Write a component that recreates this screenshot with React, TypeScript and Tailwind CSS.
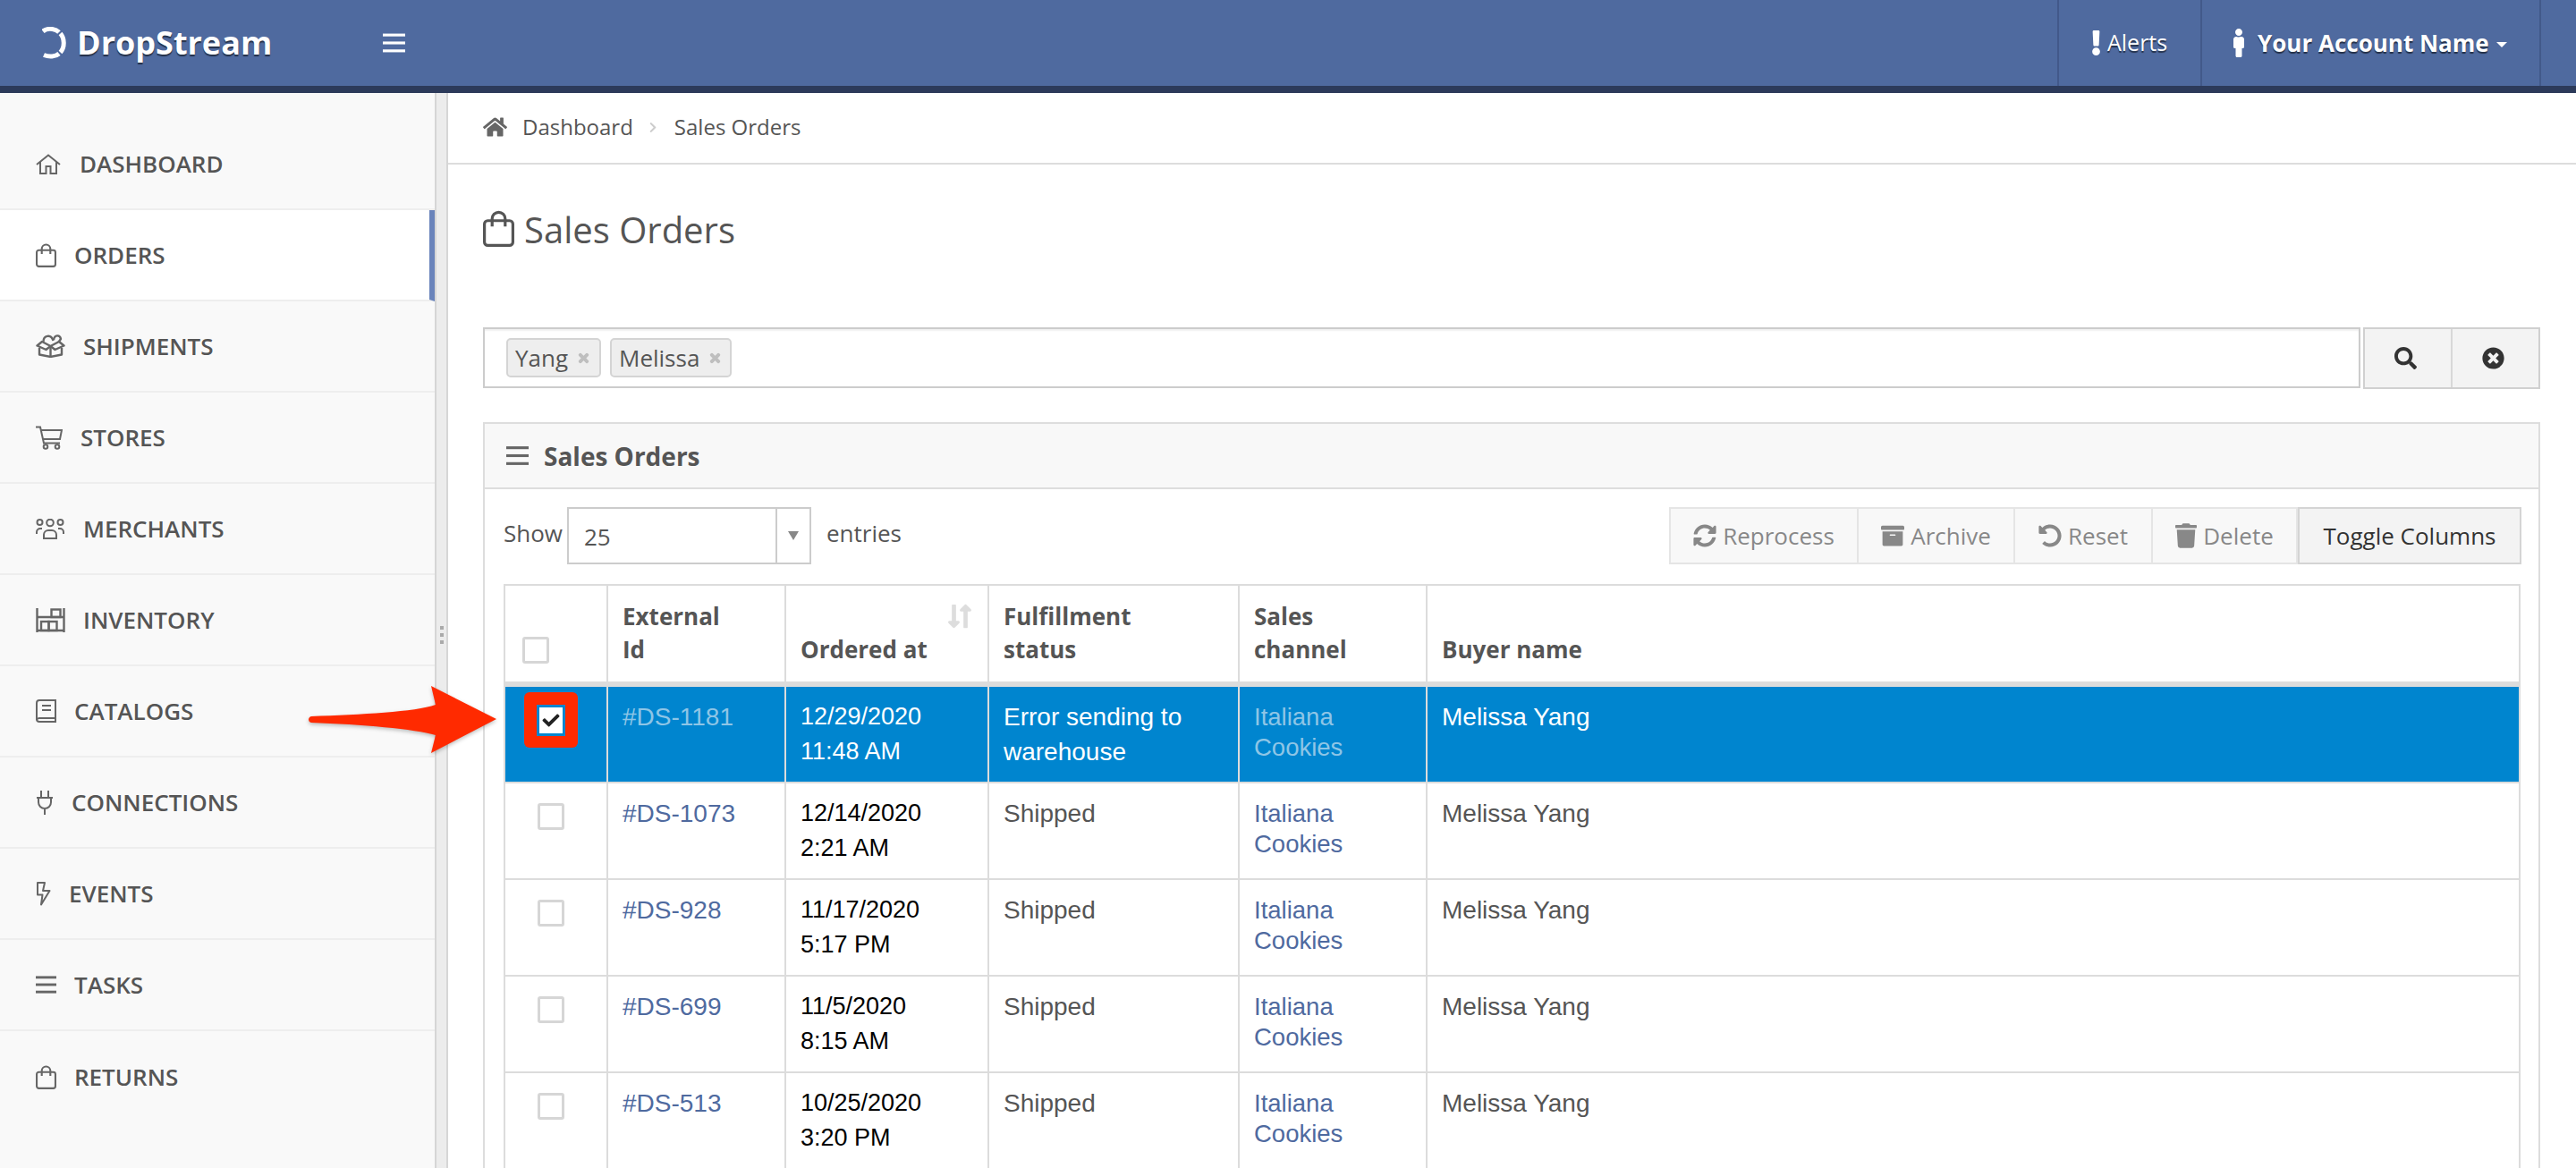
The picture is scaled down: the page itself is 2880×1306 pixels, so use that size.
import React from "react";
import { FaHome, FaSearch, FaTimesCircle, FaExclamation, FaMale, FaSyncAlt, FaArchive, FaUndoAlt, FaTrash, FaCheck, FaTimes, FaChevronRight, FaLongArrowAltDown, FaLongArrowAltUp } from "react-icons/fa";

type P = { className?: string };
const Bag = ({ className }: P) => (
  <svg viewBox="0 0 24 28" fill="none" stroke="currentColor" strokeWidth="2.200" className={className}>
    <rect x="1.100" y="8" width="21.800" height="18.900" rx="2.500" />
    <path d="M7 12.500V6.500a5 5 0 0 1 10 0v6" />
  </svg>
);
const Box = ({ className }: P) => (
  <svg viewBox="0 0 33 26" fill="none" stroke="currentColor" strokeWidth="2.400" strokeLinejoin="round" className={className}>
    <path d="M4 15v7.500l12.500 2.500 12.500-2.500V15" />
    <path d="M16.500 25V13" />
    <path d="M1.500 12.500 7 8l9.500 5L26 8l5.500 4.500-10 4.500-5-4-5 4z" />
    <path d="M8.500 8C8.500 1 17 -1 19.500 7" />
    <path d="M20 6c1-6 7-6 8-1l-2.500 3.500" />
  </svg>
);
const Shelf = ({ className }: P) => (
  <svg viewBox="0 0 33 27" fill="none" stroke="currentColor" strokeWidth="2.400" className={className}>
    <path d="M1.500 0v27M31.500 0v27M1 10h31M1 25h31" />
    <rect x="17.500" y="1.500" width="10" height="8.500" />
    <rect x="6" y="15" width="8.500" height="10" />
    <rect x="14.500" y="15" width="9" height="10" />
  </svg>
);
const Book = ({ className }: P) => (
  <svg viewBox="0 0 23 26" fill="none" stroke="currentColor" strokeWidth="2" className={className}>
    <path d="M4 1h18v20H4a3 3 0 0 0-3 2V4a3 3 0 0 1 3-3z" />
    <path d="M1 22a3 3 0 0 0 3 3h18v-4M7 7h10M7 12h10" />
  </svg>
);
const HouseIcon = ({ className }: P) => (
  <svg viewBox="0 0 28 23" fill="none" stroke="currentColor" strokeWidth="2" className={className}>
    <path d="M1 12 14 1.500 27 12M5 9v13h6.500v-8h5v8H23V9" />
  </svg>
);
const Cart = ({ className }: P) => (
  <svg viewBox="0 0 30 27" fill="none" stroke="currentColor" strokeWidth="2" className={className}>
    <path d="M0 1.500h5l4 18h18M6 5h23l-2 10H8.500" />
    <circle cx="11" cy="23.500" r="2.300" />
    <circle cx="24" cy="23.500" r="2.300" />
  </svg>
);
const Group = ({ className }: P) => (
  <svg viewBox="0 0 32 23" fill="none" stroke="currentColor" strokeWidth="2" className={className}>
    <circle cx="4.500" cy="4" r="3" />
    <circle cx="16" cy="4.500" r="3.800" />
    <circle cx="27.500" cy="4" r="3" />
    <path d="M9 22v-4a5 5 0 0 1 5-5h4a5 5 0 0 1 5 5v4zM1 17v-2a4 4 0 0 1 4-4h2M31 17v-2a4 4 0 0 0-4-4h-2" />
  </svg>
);
const PlugIcon = ({ className }: P) => (
  <svg viewBox="0 0 20 27" fill="none" stroke="currentColor" strokeWidth="2" className={className}>
    <path d="M6 0v8M14 0v8M1 8h18M3 8v5c0 4 3 7 7 7s7-3 7-7V8M10 20v7" />
  </svg>
);
const Bolt = ({ className }: P) => (
  <svg viewBox="0 0 17 27" fill="none" stroke="currentColor" strokeWidth="2" className={className}>
    <path d="M2 1h8L8 10h7.500L6 25.500l1.500-11H2z" strokeLinejoin="round" />
  </svg>
);
const Lines = ({ className }: P) => (
  <svg viewBox="0 0 24 20" fill="currentColor" className={className}>
    <rect y="0" width="24" height="3" />
    <rect y="8.500" width="24" height="3" />
    <rect y="17" width="24" height="3" />
  </svg>
);

const nav = [
  { label: "DASHBOARD", icon: <HouseIcon className="w-[28px] h-[23px]" />, gap: "ml-[21px]" },
  { label: "ORDERS", icon: <Bag className="w-[23px] h-[27px]" />, gap: "ml-[20px]", active: true },
  { label: "SHIPMENTS", icon: <Box className="w-[33px] h-[26px]" />, gap: "ml-[20px]" },
  { label: "STORES", icon: <Cart className="w-[30px] h-[27px]" />, gap: "ml-[20px]" },
  { label: "MERCHANTS", icon: <Group className="w-[32px] h-[23px]" />, gap: "ml-[21px]" },
  { label: "INVENTORY", icon: <Shelf className="w-[33px] h-[27px]" />, gap: "ml-[20px]" },
  { label: "CATALOGS", icon: <Book className="w-[23px] h-[26px]" />, gap: "ml-[20px]" },
  { label: "CONNECTIONS", icon: <PlugIcon className="w-[20px] h-[27px]" />, gap: "ml-[20px]" },
  { label: "EVENTS", icon: <Bolt className="w-[17px] h-[27px]" />, gap: "ml-[20px]" },
  { label: "TASKS", icon: <Lines className="w-[23px] h-[20px]" />, gap: "ml-[20px]" },
  { label: "RETURNS", icon: <Bag className="w-[23px] h-[27px]" />, gap: "ml-[20px]", last: true },
];

const rows = [
  { id: "#DS-1181", d1: "12/29/2020", d2: "11:48 AM", status: ["Error sending to", "warehouse"], sel: true },
  { id: "#DS-1073", d1: "12/14/2020", d2: "2:21 AM", status: ["Shipped"] },
  { id: "#DS-928", d1: "11/17/2020", d2: "5:17 PM", status: ["Shipped"] },
  { id: "#DS-699", d1: "11/5/2020", d2: "8:15 AM", status: ["Shipped"] },
  { id: "#DS-513", d1: "10/25/2020", d2: "3:20 PM", status: ["Shipped"] },
];

const Tag = ({ text, className }: { text: string; className: string }) => (
  <div className={`flex items-center h-[44px] bg-[#eeeeee] border-2 border-[#d4d4d4] rounded-[5px] pl-[8px] ${className}`}>
    <span>{text}</span>
    <FaTimes stroke="currentColor" strokeWidth={40} className="w-[15px] h-[15px] text-[#bfbfbf] ml-[10px]" />
  </div>
);

const ActionBtn = ({ icon, text, w }: { icon: React.ReactNode; text: string; w: string }) => (
  <div className={`flex items-center justify-center gap-[7px] h-full border-r-2 border-[#e5e5e5] text-[#888888] ${w}`}>
    {icon}
    <span>{text}</span>
  </div>
);

const Check = ({ className = "" }: { className?: string }) => (
  <div className={`w-[30px] h-[30px] bg-white border-[3px] border-[#d6d6d6] rounded-[3px] ${className}`} />
);

const th = "border-r-2 border-b-[6px] border-[#dcdcdc] align-bottom text-left font-bold px-[16px] pb-[17px] leading-[37px] text-[#555555] text-[26px]";
const td = "border-r-2 border-b-2 border-[#dcdcdc] align-top px-[16px] pt-[14px] leading-[39px] h-[108px]";

export default function App() {
  return (
    <div className="w-[2880px] h-[1306px] overflow-hidden bg-white text-[26px] text-[#555555] [font-family:'Open_Sans',sans-serif] relative">
      <header className="h-[104px] bg-[#4f6a9f] border-b-[8px] border-[#2c3a5a] flex items-stretch text-white [text-shadow:0_2px_1px_rgba(0,0,0,0.55)]">
        <div className="flex items-center pl-[47px] w-[428px]">
          <svg viewBox="0 0 28 36" className="w-[28px] h-[36px] -mt-[1px] [filter:blur(0.6px)]" fill="none" stroke="white" strokeWidth="5">
            <path d="M1 5c3-2.500 7-3 10.500-2.500 3 .4 5.500 1.500 7.500 3.500" />
            <path d="M20.500 7.500c5 5.500 5 15.500 0 21" />
            <path d="M19 30c-4 3.500-11 4-17 1.500" />
          </svg>
          <span className="ml-[11px] text-[36px] font-bold leading-none">DropStream</span>
        </div>
        <div className="flex items-center">
          <Lines className="w-[25px] h-[22px] text-white" />
        </div>
        <div className="ml-auto flex items-stretch mr-[39px]">
          <div className="w-[160px] border-l-2 border-[#42598a] flex items-center pl-[36px]">
            <FaExclamation className="w-[13px] h-[28px] -ml-[1px]" />
            <span className="ml-[6px] text-[25px]">Alerts</span>
          </div>
          <div className="w-[381px] border-x-2 border-[#42598a] flex items-center pl-[34px] font-bold">
            <FaMale className="w-[16px] h-[32px] -ml-[1px]" />
            <span className="ml-[13px]">Your Account Name</span>
            <span className="ml-[8px] w-0 h-0 border-x-[6px] border-x-transparent border-t-[6px] border-t-white mt-[4px]" />
          </div>
        </div>
      </header>

      <div className="flex h-[1202px]">
        <aside className="w-[486px] shrink-0 bg-[#f9f9f9] pt-[29px]">
          {nav.map((n) => (
            <div
              key={n.label}
              className={`h-[102px] flex items-center pl-[40px] font-semibold text-[#555555] ${n.last ? "" : "border-b-2 border-[#eeeeee]"} ${n.active ? "bg-white border-r-[6px] border-r-[#6a84bb]" : ""}`}
            >
              <span className="text-[#666666] flex items-center">{n.icon}</span>
              <span className={n.gap}>{n.label}</span>
            </div>
          ))}
        </aside>
        <div className="w-[15px] shrink-0 bg-[#ececec] border-x-2 border-[#d6d6d6] flex flex-col items-center justify-center gap-[4px] pt-[10px]">
          <span className="w-[4px] h-[4px] bg-[#aaaaaa]" />
          <span className="w-[4px] h-[4px] bg-[#aaaaaa]" />
          <span className="w-[4px] h-[4px] bg-[#aaaaaa]" />
        </div>

        <main className="flex-1 min-w-0">
          <div className="h-[80px] border-b-2 border-[#dddddd] flex items-center pl-[39px] pb-[2px] text-[24px]">
            <FaHome className="w-[27px] h-[24px] text-[#666666]" />
            <span className="ml-[17px]">Dashboard</span>
            <FaChevronRight className="w-[10px] h-[13px] text-[#cccccc] ml-[17px]" />
            <span className="ml-[19px]">Sales Orders</span>
          </div>

          <div className="pl-[39px] pr-[40px]">
            <div className="h-[182px] pt-[51px] flex items-start">
              <Bag className="w-[35px] h-[41px] text-[#555555]" />
              <h1 className="ml-[11px] text-[40px] leading-[44px] font-normal">Sales Orders</h1>
            </div>

            <div className="flex h-[69px]">
              <div className="flex-1 h-[68px] border-2 border-[#cccccc] flex items-center pl-[24px] shadow-[inset_0_2px_2px_rgba(0,0,0,0.06)]">
                <Tag text="Yang" className="w-[106px]" />
                <Tag text="Melissa" className="w-[136px] ml-[10px]" />
              </div>
              <div className="ml-[3px] w-[198px] border-2 border-[#d0d0d0] bg-[#f3f3f3] flex items-stretch text-[#333333]">
                <div className="w-[98px] border-r-2 border-[#d8d8d8] flex items-center justify-center pr-[6px]">
                  <FaSearch className="w-[25px] h-[25px]" />
                </div>
                <div className="flex-1 flex items-center justify-center pr-[6px]">
                  <FaTimesCircle className="w-[25px] h-[25px]" />
                </div>
              </div>
            </div>

            <section className="mt-[37px] border-2 border-b-0 border-[#dddddd] h-[900px]">
              <div className="h-[73px] bg-[#f8f8f8] border-b-2 border-[#dddddd] flex items-center pl-[24px] font-bold">
                <Lines className="w-[25px] h-[21px] text-[#666666]" />
                <span className="ml-[17px] text-[28px]">Sales Orders</span>
              </div>

              <div className="pt-[20px] pl-[21px] pr-[20px]">
                <div className="flex items-center h-[64px] -mr-[1px]">
                  <span className="-mt-[5px]">Show</span>
                  <div className="ml-[5px] w-[273px] h-[64px] border-2 border-[#cccccc] flex items-stretch">
                    <div className="flex-1 flex items-center pl-[17px] pt-[2px] border-r-2 border-[#cccccc]">25</div>
                    <div className="w-[36px] flex items-center justify-center">
                      <span className="w-0 h-0 border-x-[6px] border-x-transparent border-t-[10px] border-t-[#888888]" />
                    </div>
                  </div>
                  <span className="ml-[17px] -mt-[5px]">entries</span>
                  <div className="ml-auto flex items-stretch h-[64px] border-y-2 border-l-2 border-[#e5e5e5] bg-[#f8f8f8]">
                    <ActionBtn w="w-[210px]" text="Reprocess" icon={<FaSyncAlt className="w-[26px] h-[26px]" />} />
                    <ActionBtn w="w-[175px]" text="Archive" icon={<FaArchive className="w-[26px] h-[26px]" />} />
                    <ActionBtn w="w-[154px]" text="Reset" icon={<FaUndoAlt className="w-[26px] h-[26px]" />} />
                    <ActionBtn w="w-[162px]" text="Delete" icon={<FaTrash className="w-[24px] h-[28px]" />} />
                    <div className="w-[250px] -my-[2px] bg-[#f3f3f3] border-2 border-[#d4d4d4] flex items-center justify-center text-[#333333]">Toggle Columns</div>
                  </div>
                </div>

                <table className="mt-[22px] table-fixed w-[2255px] border-separate border-spacing-0 border-t-2 border-l-2 border-[#dcdcdc]">
                  <colgroup>
                    <col className="w-[115px]" />
                    <col className="w-[199px]" />
                    <col className="w-[227px]" />
                    <col className="w-[280px]" />
                    <col className="w-[210px]" />
                    <col />
                  </colgroup>
                  <thead>
                    <tr>
                      <th className={`${th} !px-0 !pb-[20px] h-[113px]`}><Check className="ml-[19px]" /></th>
                      <th className={th}>External<br />Id</th>
                      <th className={`${th} relative`}>
                        Ordered at
                        <span className="absolute right-[17px] top-[19px] flex text-[#dddddd]">
                          <FaLongArrowAltDown className="w-[15px] h-[30px] -mr-[1px]" />
                          <FaLongArrowAltUp className="w-[15px] h-[30px] -ml-[1px]" />
                        </span>
                      </th>
                      <th className={th}>Fulfillment<br />status</th>
                      <th className={th}>Sales<br />channel</th>
                      <th className={th}>Buyer name</th>
                    </tr>
                  </thead>
                  <tbody className="[font-family:'Liberation_Sans',Arial,sans-serif] text-[28px]">
                    {rows.map((r) => (
                      <tr key={r.id} className={r.sel ? "bg-[#0085cf] text-white" : ""}>
                        <td className={`${td} !p-0`}>
                          {r.sel ? (
                            <div className="ml-[21px] mt-[6px] mb-auto w-[60px] h-[62px] bg-[#ff2a00] rounded-[6px] flex items-center justify-center">
                              <div className="w-[32px] h-[35px] border-[3px] border-[#0085cf] bg-white flex items-center justify-center">
                                <FaCheck className="w-[22px] h-[19px] text-[#222222]" />
                              </div>
                            </div>
                          ) : (
                            <Check className="ml-[36px] mt-[22px] mb-auto" />
                          )}
                        </td>
                        <td className={td}>
                          <span className={r.sel ? "text-[#8ec5e6]" : "text-[#4f6a9f]"}>{r.id}</span>
                        </td>
                        <td className={`${td} text-[27px] ${r.sel ? "text-white" : "text-black"}`}>
                          {r.d1}
                          <br />
                          {r.d2}
                        </td>
                        <td className={`${td} ${r.sel ? "" : "text-[#555555]"}`}>
                          {r.status.map((s) => (
                            <div key={s}>{s}</div>
                          ))}
                        </td>
                        <td className={td}>
                          <div className={`text-[27.5px] leading-[33.5px] mt-[3px] ${r.sel ? "text-[#8ec5e6]" : "text-[#4f6a9f]"}`}>
                            Italiana
                            <br />
                            Cookies
                          </div>
                        </td>
                        <td className={`${td} ${r.sel ? "" : "text-[#555555]"}`}>Melissa Yang</td>
                      </tr>
                    ))}
                  </tbody>
                </table>
              </div>
            </section>
          </div>
        </main>
      </div>

      <svg viewBox="0 0 212 78" className="absolute left-[344px] top-[766px] w-[212px] h-[78px] [filter:drop-shadow(0_2px_2px_rgba(0,0,0,0.25))]">
        <path d="M138 1 L211 38 L138 76 L143 56 C120 49 60 44 4 42 C0 41 0 36 4 35 C60 33 120 30 143 22 Z" fill="#ff2a00" />
      </svg>
    </div>
  );
}
